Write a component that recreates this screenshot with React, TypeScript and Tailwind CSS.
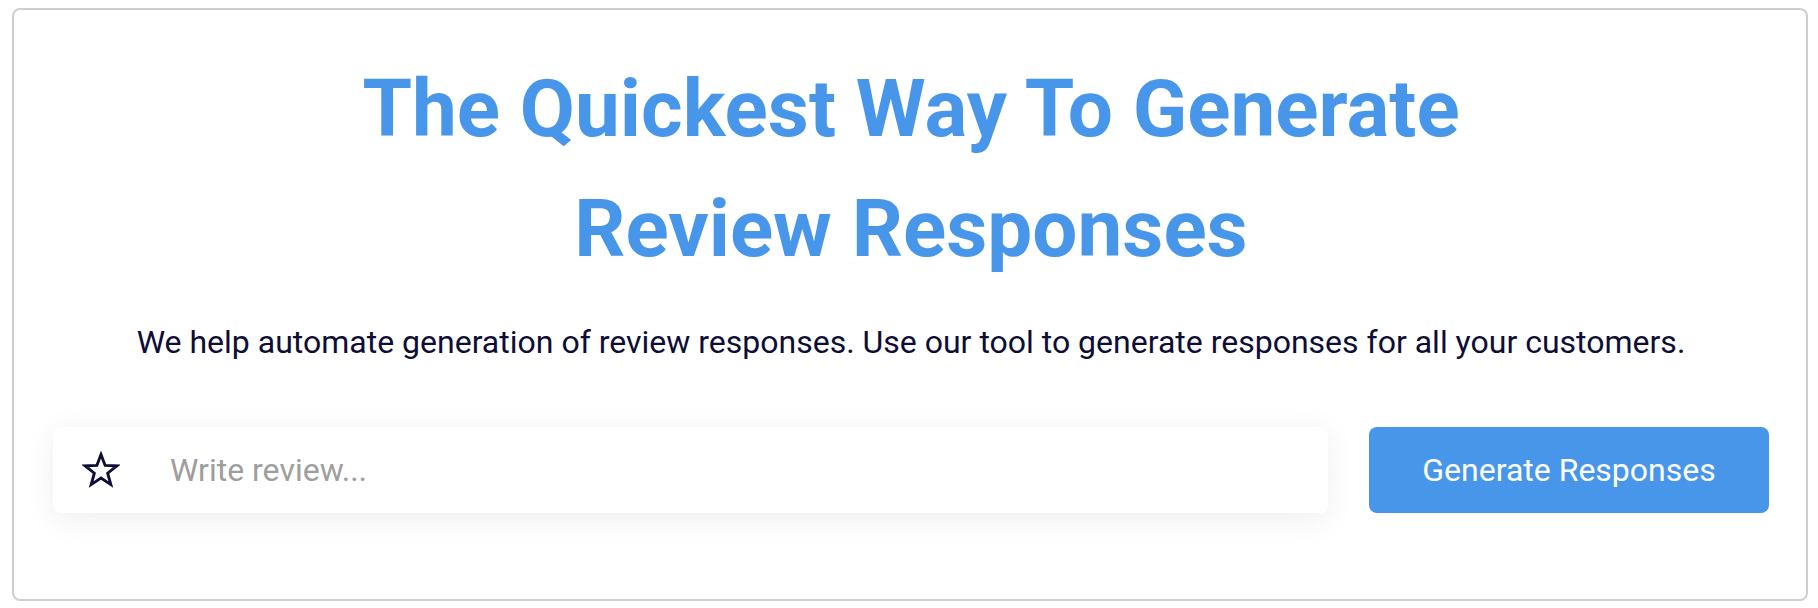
import React from "react";

function StarIcon() {
  return (
    <svg width="38" height="38" viewBox="0 0 24 24" fill="none">
      <polygon
        points="12,2.2 14.6,9.1 22,9.4 16.2,14 18.2,21.2 12,17.1 5.8,21.2 7.8,14 2,9.4 9.4,9.1"
        stroke="#0d0d35"
        strokeWidth="1.8"
        strokeLinejoin="miter"
      />
    </svg>
  );
}

export default function App() {
  return (
    <div className="h-[608px] w-full bg-white pl-[12px] pr-[10px] pt-[8px] pb-[7px] font-['Roboto',sans-serif]">
      <div className="flex h-full flex-col items-center rounded-lg border-2 border-[#cfcfcf] pl-[39px] pr-[37px] pt-[39px]">
        <h1 className="text-center text-[80px] font-bold leading-[120px] text-[#4896ea]">
          The Quickest Way To Generate
          <br />
          Review Responses
        </h1>
        <p className="mt-[29px] text-center text-[32px] leading-[48px] text-[#0d0d35]">
          We help automate generation of review responses. Use our tool to generate responses for all your customers.
        </p>
        <div className="mt-[61px] flex w-full gap-[41px]">
          <div className="flex h-[86px] flex-1 items-center rounded-lg bg-white pl-[29px] shadow-[0_6px_32px_rgba(0,0,0,0.07)]">
            <StarIcon />
            <input
              className="ml-[50px] flex-1 bg-transparent text-[32px] text-[#0d0d35] outline-none placeholder:text-[#9e9e9e]"
              placeholder="Write review..."
            />
          </div>
          <button className="h-[86px] w-[400px] rounded-lg bg-[#4896ea] text-[32px] text-white">
            Generate Responses
          </button>
        </div>
      </div>
    </div>
  );
}
